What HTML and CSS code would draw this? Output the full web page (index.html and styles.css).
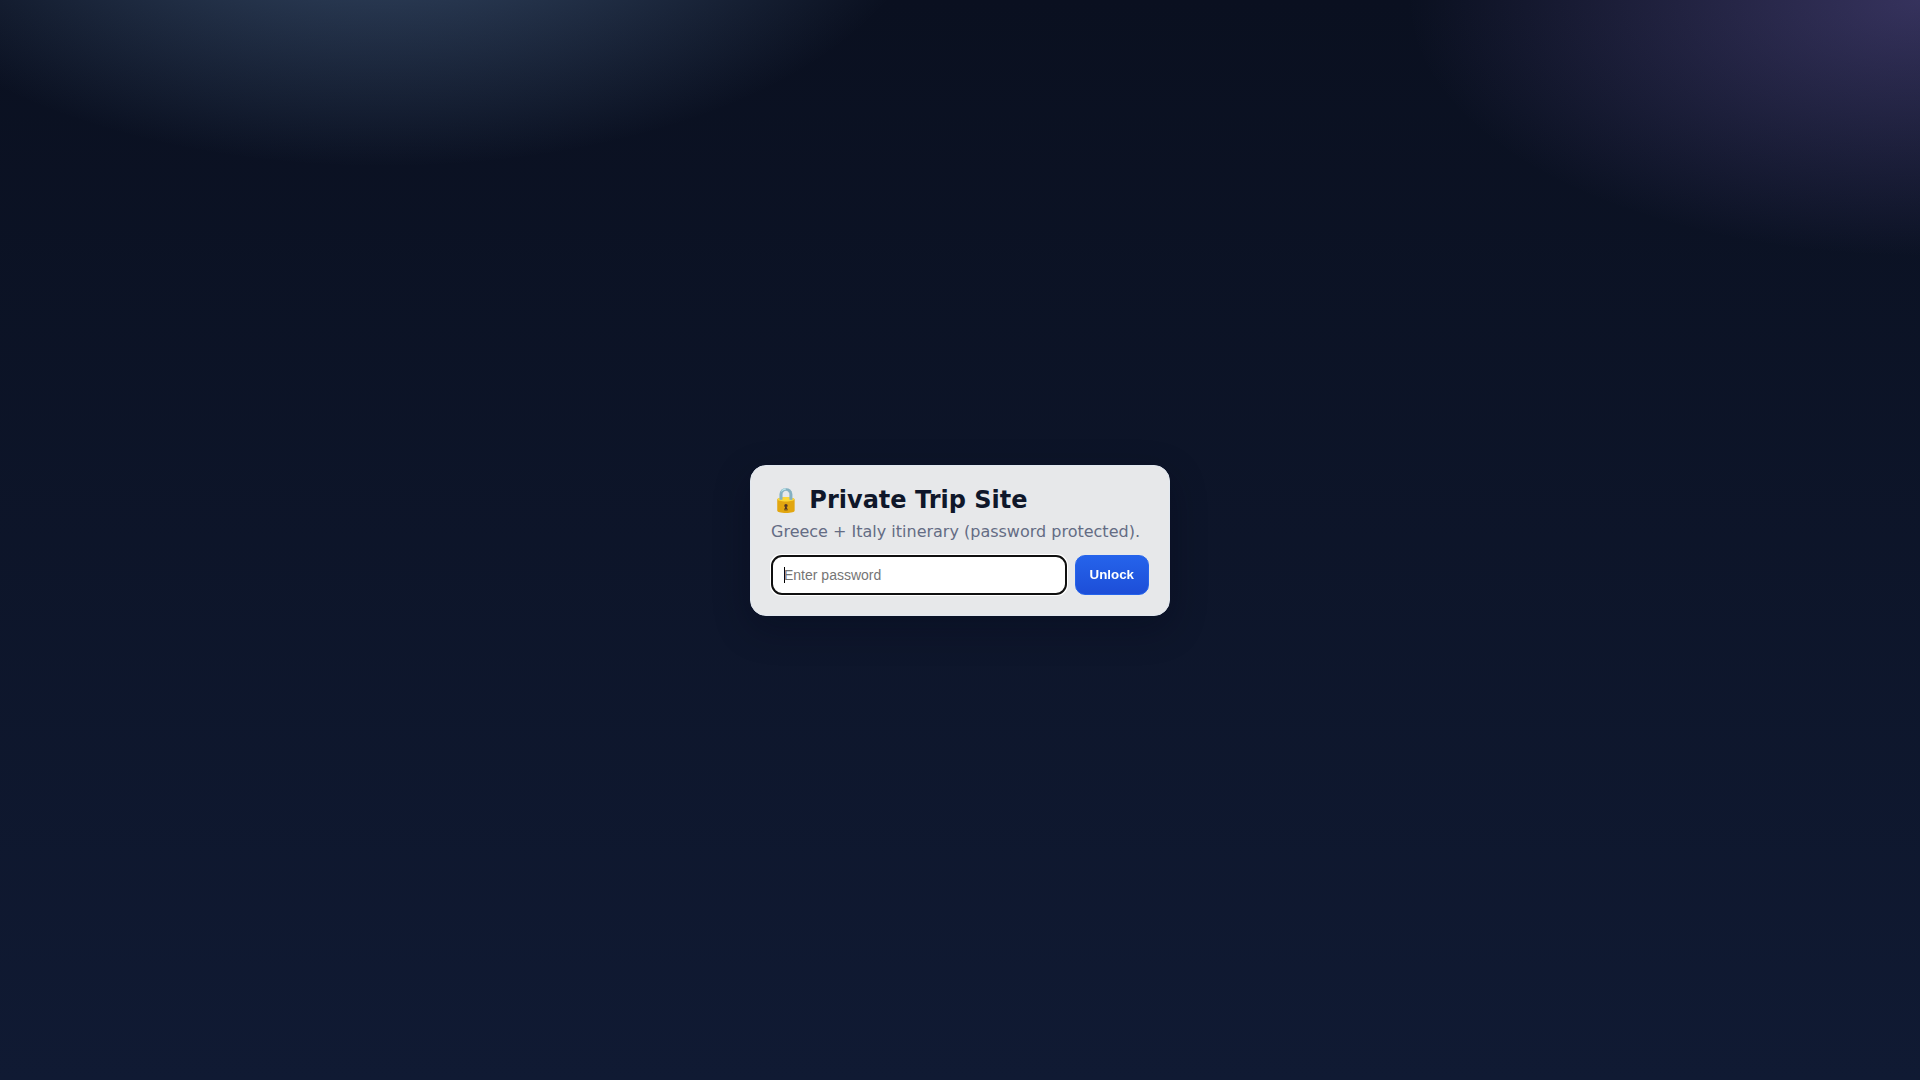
FILE: index.html
```html
<!DOCTYPE html>
<html lang="en">
<head>
  <meta charset="UTF-8">
  <meta name="viewport" content="width=device-width, initial-scale=1">
  <title>Private Trip Site</title>
  <link rel="stylesheet" href="styles.css">
</head>
<body>

<main class="card">
  <h1>🔒 Private Trip Site</h1>
  <p class="muted">Greece + Italy itinerary (password protected).</p>
  <form class="row">
    <input type="password" id="password" placeholder="Enter password" aria-label="Password" autofocus>
    <button type="submit">Unlock</button>
  </form>
</main>

<script>
  const form = document.querySelector('.row');
  const password = document.getElementById('password');

  form.addEventListener('submit', (e) => {
    e.preventDefault();
    password.select();
  });

  password.focus();
</script>

</body>
</html>
```
FILE: styles.css
```css
* {
  box-sizing: border-box;
}
body {
  margin: 0;
  min-height: 100vh;
  display: grid;
  place-items: center;
  font-family: "DejaVu Sans", sans-serif;
  color: #0f172a;
  background:
    radial-gradient(1000px 500px at 20% -10%, rgba(147, 197, 253, 0.35), transparent 55%),
    radial-gradient(900px 450px at 100% 0%, rgba(167, 139, 250, 0.28), transparent 57%),
    linear-gradient(180deg, #0a1020, #101a33);
}
.card {
  width: min(420px, 92vw);
  padding: 20px;
  border: 1px solid #e2e8f0;
  border-radius: 16px;
  background: rgba(255, 255, 255, 0.9);
  box-shadow: 0 12px 36px rgba(2, 6, 23, 0.3);
}
h1 {
  margin: 0 0 8px;
  font-size: 24px;
  line-height: 28px;
}
.muted {
  margin: 0 0 14px;
  color: #646c84;
  font-size: 16px;
}
.row {
  display: flex;
  gap: 8px;
}
input {
  flex: 1;
  min-width: 0;
  padding: 11px 12px;
  border: 1px solid #cbd5e1;
  border-radius: 10px;
  background-color: #fff;
  font-family: "Liberation Sans", sans-serif;
  font-size: 14px;
}
/* steady caret while the field is empty */
input:focus:placeholder-shown {
  caret-color: transparent;
  background-image: linear-gradient(#000, #000);
  background-origin: content-box;
  background-position: 0 50%;
  background-size: 1px 16px;
  background-repeat: no-repeat;
}
button {
  padding: 11px 14px;
  border: 1px solid #2563eb;
  border-radius: 10px;
  background: linear-gradient(180deg, #2563eb, #1d4ed8);
  color: #fff;
  font-family: "Liberation Sans", sans-serif;
  font-weight: 700;
  cursor: pointer;
}
```
